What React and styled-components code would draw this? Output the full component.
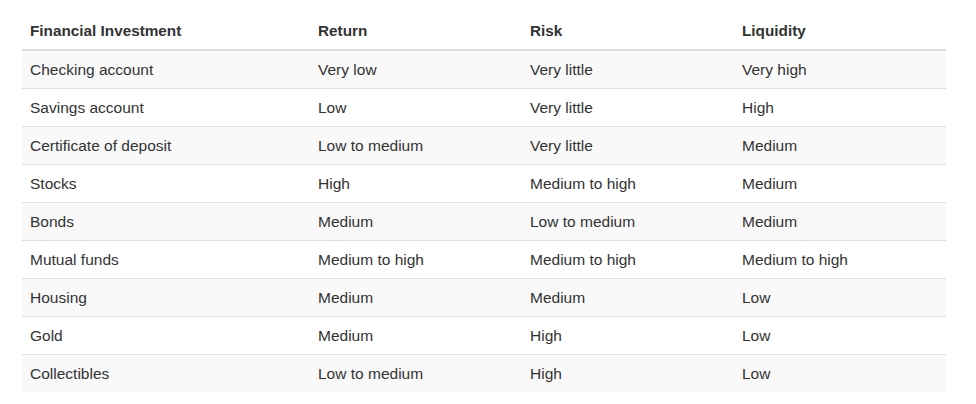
import styled, { createGlobalStyle } from 'styled-components';

const GlobalStyle = createGlobalStyle`
    body {
        margin: 0;
        background: #fff;
        font-family: "Liberation Sans", Arial, sans-serif;
        font-size: 15.5px;
        color: #333;
    }
`;

const Page = styled.div`
    padding: 12px 30px 12px 22px;
`;

const Table = styled.table`
    width: 924px;
    table-layout: fixed;
    border-collapse: collapse;
    border-spacing: 0;
`;

const HeadCell = styled.th`
    box-sizing: border-box;
    text-align: left;
    font-weight: bold;
    font-size: 15.3px;
    padding: 8px;
    line-height: 21px;
    border-bottom: 2px solid #ddd;
    width: ${(props) => props.w}px;
`;

const Row = styled.tr`
    background: ${(props) => (props.striped ? '#f9f9f9' : '#fff')};
`;

const Cell = styled.td`
    padding: 8px;
    line-height: 21px;
    border-top: 1px solid #ddd;
    white-space: nowrap;
`;

const columns = [
    { title: 'Financial Investment', w: 288 },
    { title: 'Return', w: 212 },
    { title: 'Risk', w: 212 },
    { title: 'Liquidity', w: 212 },
];

const rows = [
    ['Checking account', 'Very low', 'Very little', 'Very high'],
    ['Savings account', 'Low', 'Very little', 'High'],
    ['Certificate of deposit', 'Low to medium', 'Very little', 'Medium'],
    ['Stocks', 'High', 'Medium to high', 'Medium'],
    ['Bonds', 'Medium', 'Low to medium', 'Medium'],
    ['Mutual funds', 'Medium to high', 'Medium to high', 'Medium to high'],
    ['Housing', 'Medium', 'Medium', 'Low'],
    ['Gold', 'Medium', 'High', 'Low'],
    ['Collectibles', 'Low to medium', 'High', 'Low'],
];

function App() {
    return (
        <Page>
            <GlobalStyle />
            <Table>
                <thead>
                    <tr>
                        {columns.map((c) => (
                            <HeadCell key={c.title} w={c.w}>
                                {c.title}
                            </HeadCell>
                        ))}
                    </tr>
                </thead>
                <tbody>
                    {rows.map((r, i) => (
                        <Row key={r[0]} striped={i % 2 === 0}>
                            {r.map((v, j) => (
                                <Cell key={j}>{v}</Cell>
                            ))}
                        </Row>
                    ))}
                </tbody>
            </Table>
        </Page>
    );
}

export default App;
